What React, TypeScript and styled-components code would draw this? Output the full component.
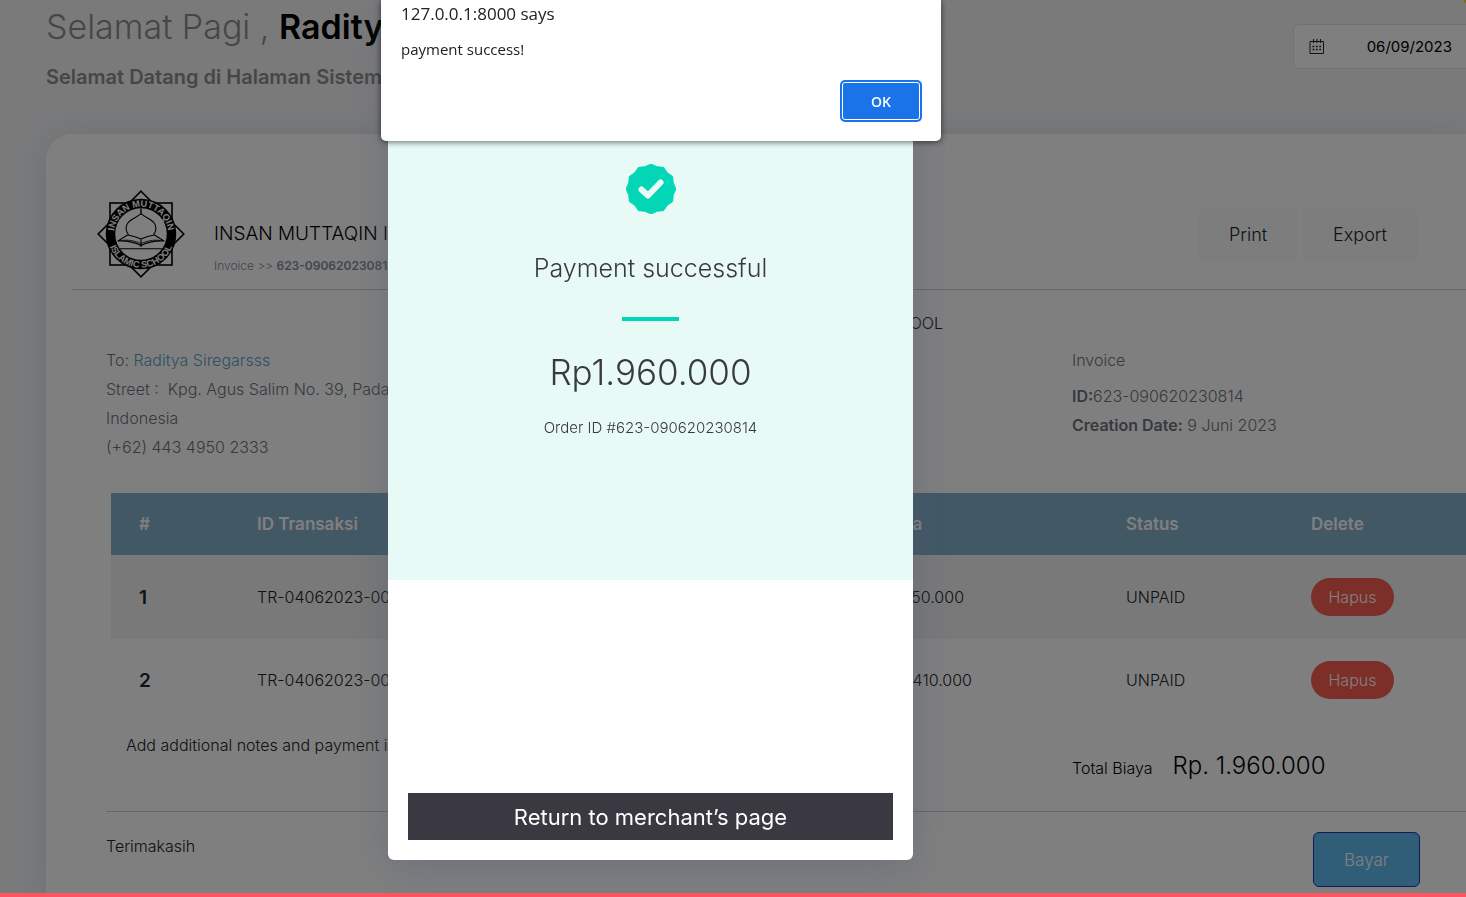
import React from "react";
import styled, { createGlobalStyle } from "styled-components";

const GlobalStyle = createGlobalStyle`
  *, *::before, *::after { box-sizing: border-box; }
  body {
    margin: 0;
    background: #f4f5f7;
    color: #212529;
    font-family: Inter, "Liberation Sans", sans-serif;
    font-size: 16px;
    font-weight: 300;
    overflow: hidden;
  }
  h1, h2, p { margin: 0; font-weight: 300; }
  button { font: inherit; cursor: pointer; }
`;

const Page = styled.div`
  position: relative;
  display: flex;
  flex-direction: column;
  min-height: 100vh;
  padding-left: 46px;
  overflow: hidden;
`;

const Header = styled.header`
  display: flex;
  justify-content: space-between;
  height: 134px;
`;

const Greeting = styled.h1`
  padding-top: 4px;
  font-size: 34px;
  line-height: 46px;
  color: #8d8d8d;
  white-space: nowrap;

  strong { font-weight: 600; color: #000; }
`;

const SubGreeting = styled.p`
  padding-top: 13px;
  font-size: 20px;
  line-height: 28px;
  font-weight: 600;
  color: #8d8d8d;
  white-space: nowrap;
`;

const DateField = styled.label`
  display: flex;
  align-items: center;
  justify-content: space-between;
  width: 173px;
  height: 45px;
  margin-top: 24px;
  padding: 0 14px;
  border: 1px solid #dee2e6;
  border-right: 0;
  border-radius: 6px 0 0 6px;
  background: #fff;
`;

const DateInput = styled.input`
  width: 86px;
  padding: 0;
  border: 0;
  background: transparent;
  color: #000;
  font: inherit;
  font-size: 15px;
  font-weight: 400;
  text-align: right;
`;

const Spark = styled.span`
  position: absolute;
  top: -6px;
  right: -6px;
  width: 9px;
  height: 9px;
  border-radius: 50%;
  background: #ffe000;
`;

const Card = styled.main`
  flex: 1;
  padding: 56px 0 6px;
  border-radius: 26px 0 0 0;
  background: #fff;
  box-shadow: 0 0 30px rgba(130, 155, 180, 0.25);
`;

const CardHead = styled.div`
  display: flex;
  align-items: flex-start;
  margin-left: 26px;
  padding: 0 48px 11px 25px;
  border-bottom: 1px solid #c9cccf;
`;

const School = styled.div`
  flex: 1;
  padding: 29px 0 0 29px;
`;

const SchoolName = styled.h2`
  font-size: 19px;
  line-height: 30px;
  color: #000;
  white-space: nowrap;
`;

const Crumb = styled.p`
  padding-top: 8px;
  font-size: 12px;
  line-height: 18px;
  color: #7e8d9f;

  strong { font-weight: 600; }
`;

const Actions = styled.div`
  display: flex;
  gap: 4px;
  padding-top: 17px;
`;

const GhostButton = styled.button`
  height: 55px;
  padding: 0 31px;
  border: 0;
  border-radius: 8px;
  background: #fbfbfb;
  color: #212529;
  font-size: 18px;
`;

const Body = styled.div`
  padding-left: 60px;
`;

const Centered = styled.p`
  margin-left: 36px;
  padding-top: 19px;
  line-height: 28px;
  text-align: center;
`;

const Columns = styled.div<{ $top: number }>`
  display: grid;
  grid-template-columns: 1fr 394px;
  padding-top: ${(p) => p.$top}px;
`;

const Lines = styled.ul`
  margin: 0;
  padding: 0;
  list-style: none;
  color: #6c757d;
  line-height: 29px;

  strong { font-weight: 600; }
  a { color: #5d9fc5; text-decoration: none; }
  p { padding-bottom: 7px; }
`;

const Address = styled.span`
  display: block;
  width: 340px;
`;

const Table = styled.table`
  width: calc(100% - 5px);
  margin: 31px 0 0 5px;
  border-collapse: collapse;
  table-layout: fixed;

  th, td { padding: 0 28px; text-align: left; white-space: nowrap; }
  thead tr { height: 62px; background: #84b0ca; }
  thead th { color: #fff; font-size: 17px; font-weight: 600; }
  tbody th { color: #212529; font-size: 19px; font-weight: 600; }
  tbody tr { height: 82px; }
  tbody tr:nth-child(odd) { height: 84px; background: #f2f2f2; }
`;

const DeleteButton = styled.button`
  height: 38px;
  width: 83px;
  border: 0;
  border-radius: 19px;
  background: #f95f53;
  color: #fff;
`;

const Notes = styled.p`
  padding: 10px 0 0 20px;
  line-height: 28px;
`;

const Total = styled.p`
  display: flex;
  align-items: baseline;
  gap: 20px;
  padding-top: 26px;
  line-height: 38px;
  color: #000;

  strong { font-size: 24px; font-weight: 300; }
`;

const Footer = styled.footer`
  display: flex;
  justify-content: space-between;
  align-items: flex-start;
  margin-top: 24px;
  padding: 20px 46px 0 0;
  border-top: 1px solid #c9cccf;
  line-height: 28px;
`;

const PayButton = styled.button`
  width: 107px;
  height: 55px;
  border: 1px solid #1f3bb3;
  border-radius: 6px;
  background: #60bdf3;
  color: #fff;
  font-size: 17px;
`;

const Progress = styled.div`
  position: fixed;
  inset: auto 0 0;
  height: 4px;
  background: #ff5560;
`;

const Overlay = styled.div`
  position: fixed;
  inset: 0;
  display: flex;
  justify-content: center;
  align-items: flex-start;
  padding-right: 165px;
  background: rgba(0, 0, 0, 0.5);
`;

const PaymentDialog = styled.section`
  width: 525px;
  overflow: hidden;
  border-radius: 0 0 6px 6px;
  background: #fff;
  color: #3a3942;
  box-shadow: 0 8px 40px rgba(80, 90, 115, 0.4);
  text-align: center;
`;

const Result = styled.div`
  display: flex;
  flex-direction: column;
  align-items: center;
  height: 580px;
  padding-top: 164px;
  background: #e8faf6;
`;

const ResultTitle = styled.h2`
  padding-top: 34px;
  font-size: 25px;
  line-height: 40px;
`;

const Rule = styled.span`
  width: 57px;
  height: 4px;
  margin-top: 29px;
  background: #03d6b7;
`;

const Amount = styled.p`
  padding-top: 24px;
  font-size: 35px;
  line-height: 54px;
`;

const Order = styled.p`
  padding-top: 18px;
  font-size: 15px;
  line-height: 22px;
`;

const DialogFoot = styled.div`
  padding: 213px 20px 20px;
`;

const ReturnButton = styled.button`
  width: 100%;
  height: 47px;
  border: 0;
  background: #3a3942;
  color: #fff;
  font-size: 22px;
  font-weight: 400;
`;

const AlertLayer = styled.div`
  position: fixed;
  inset: 0 0 auto;
  display: flex;
  justify-content: center;
  padding-right: 144px;
`;

const Alert = styled.div`
  display: flex;
  flex-direction: column;
  width: 560px;
  padding: 0 19px 19px 20px;
  border-radius: 0 0 5px 5px;
  background: #fff;
  box-shadow: 0 1px 6px rgba(0, 0, 0, 0.6);
  color: #202124;
  font-family: "Open Sans", "Noto Sans", sans-serif;
  font-weight: 400;
`;

const AlertTitle = styled.h2`
  font-size: 17px;
  line-height: 28px;
  font-weight: 400;
`;

const AlertText = styled.p`
  padding-top: 9px;
  font-size: 15px;
  line-height: 24px;
  font-weight: 400;
`;

const OkButton = styled.button`
  align-self: flex-end;
  width: 82px;
  height: 42px;
  margin-top: 19px;
  border: 2px solid #1a73e8;
  border-radius: 5px;
  background: #1a73e8;
  box-shadow: inset 0 0 0 1px #fff;
  color: #fff;
  font-size: 14px;
  font-weight: 600;
`;

const Logo = () => (
  <svg width="88" height="88" viewBox="0 0 88 88" role="img" aria-label="Insan Muttaqin Islamic School">
    <defs>
      <path id="arc-top" d="M16.800 44a27.200 27.200 0 0 1 54.400 0" />
      <path id="arc-bottom" d="M10.300 44a33.700 33.700 0 0 0 67.400 0" />
    </defs>
    <g fill="none" stroke="#000" strokeWidth="1.600">
      <rect x="13" y="13" width="62" height="62" />
      <path d="M44 1.200 86.800 44 44 86.800 1.200 44Z" />
    </g>
    <circle cx="44" cy="44" r="30.500" fill="#fff" stroke="#000" strokeWidth="9.500" />
    <g fill="#fff" fontFamily="Liberation Sans, sans-serif" fontSize="9.200" fontWeight="700" textAnchor="middle">
      <text><textPath href="#arc-top" startOffset="50%">INSAN MUTTAQIN</textPath></text>
      <text><textPath href="#arc-bottom" startOffset="50%">ISLAMIC SCHOOL</textPath></text>
    </g>
    <g fill="none" stroke="#000" strokeWidth="1.100" strokeLinejoin="round">
      <path d="M31.500 44.500c-3-3-3-8-1-11 3-5 10-6 13.500-10 3.500 4 10.500 5 13.500 10 2 3 2 8-1 11" />
      <path d="M44 18.500v5" strokeWidth="1.400" />
      <path d="M44 49c-4-2-9-3.500-13.500-4L21 51c8-.5 16 1 23 4.500 7-3.500 15-5 23-4.500l-9.500-6C53 45.500 48 47 44 49Zm0 0v8" />
      <path d="M25 50.500c7-1 13 .5 19 3 6-2.500 12-4 19-3" strokeWidth=".8" />
      <path d="M23 58.700h42" />
    </g>
  </svg>
);

const CalendarIcon = () => (
  <svg width="18" height="18" viewBox="0 0 18 18" fill="none" stroke="#212529" aria-hidden="true">
    <path d="M2 3.500h13.500v12H2zM5.500 1v4M9 1v4M12.500 1v4" />
    <path d="M4.500 8.500h9M4.500 11.500h9" strokeWidth="1.500" strokeDasharray="1.800 1.600" />
  </svg>
);

const badgePoints = Array.from({ length: 24 }, (_, i) => {
  const radius = i % 2 ? 23 : 25;
  const angle = (i * Math.PI) / 12;
  return `${25 + radius * Math.sin(angle)},${25 - radius * Math.cos(angle)}`;
}).join(" ");

const SuccessBadge = () => (
  <svg width="50" height="50" viewBox="0 0 50 50" aria-hidden="true">
    <polygon points={badgePoints} fill="#03d6b7" stroke="#03d6b7" strokeLinejoin="round" />
    <path d="M15.500 25.500 22 31.500 34.500 18.500" fill="none" stroke="#e8faf6" strokeWidth="6" strokeLinecap="round" strokeLinejoin="round" />
  </svg>
);

const rows = [
  { id: "TR-04062023-001", cost: "Rp. 550.000", status: "UNPAID" },
  { id: "TR-04062023-002", cost: "Rp. 1.410.000", status: "UNPAID" },
];

export default function App() {
  return (
    <>
      <GlobalStyle />
      <Page>
        <Header>
          <div>
            <Greeting>Selamat Pagi , <strong>Raditya</strong></Greeting>
            <SubGreeting>Selamat Datang di Halaman Sistem</SubGreeting>
          </div>
          <DateField>
            <CalendarIcon />
            <DateInput aria-label="Date" defaultValue="06/09/2023" />
          </DateField>
          <Spark />
        </Header>
        <Card>
          <CardHead>
            <Logo />
            <School>
              <SchoolName>INSAN MUTTAQIN ISLAMIC SCHOOL</SchoolName>
              <Crumb>Invoice &gt;&gt; <strong>623-090620230814</strong></Crumb>
            </School>
            <Actions>
              <GhostButton>Print</GhostButton>
              <GhostButton>Export</GhostButton>
            </Actions>
          </CardHead>
          <Body>
            <Centered>INSAN MUTTAQIN ISLAMIC SCHOOL</Centered>
            <Columns $top={9}>
              <Lines>
                <li>To: <a href="#customer">Raditya Siregarsss</a></li>
                <li><Address>Street :&nbsp; Kpg. Agus Salim No. 39, Padang Indonesia</Address></li>
                <li>(+62) 443 4950 2333</li>
              </Lines>
              <Lines as="div">
                <p>Invoice</p>
                <div><strong>ID:</strong>623-090620230814</div>
                <div><strong>Creation Date:</strong> 9 Juni 2023</div>
              </Lines>
            </Columns>
            <Table>
              <colgroup>
                <col style={{ width: 118 }} />
                <col />
                <col style={{ width: 253 }} />
                <col style={{ width: 185 }} />
                <col style={{ width: 183 }} />
              </colgroup>
              <thead>
                <tr><th>#</th><th>ID Transaksi</th><th>Harga</th><th>Status</th><th>Delete</th></tr>
              </thead>
              <tbody>
                {rows.map((row, i) => (
                  <tr key={row.id}>
                    <th scope="row">{i + 1}</th>
                    <td>{row.id}</td>
                    <td>{row.cost}</td>
                    <td>{row.status}</td>
                    <td><DeleteButton>Hapus</DeleteButton></td>
                  </tr>
                ))}
              </tbody>
            </Table>
            <Columns $top={0}>
              <Notes>Add additional notes and payment information</Notes>
              <Total>Total Biaya <strong>Rp. 1.960.000</strong></Total>
            </Columns>
            <Footer>
              <span>Terimakasih</span>
              <PayButton>Bayar</PayButton>
            </Footer>
          </Body>
        </Card>
      </Page>
      <Overlay>
        <PaymentDialog role="dialog" aria-label="Payment">
          <Result>
            <SuccessBadge />
            <ResultTitle>Payment successful</ResultTitle>
            <Rule />
            <Amount>Rp1.960.000</Amount>
            <Order>Order ID #623-090620230814</Order>
          </Result>
          <DialogFoot>
            <ReturnButton>Return to merchant’s page</ReturnButton>
          </DialogFoot>
        </PaymentDialog>
      </Overlay>
      <Progress />
      <AlertLayer>
        <Alert role="alertdialog" aria-label="127.0.0.1:8000 says">
          <AlertTitle>127.0.0.1:8000 says</AlertTitle>
          <AlertText>payment success!</AlertText>
          <OkButton>OK</OkButton>
        </Alert>
      </AlertLayer>
    </>
  );
}
